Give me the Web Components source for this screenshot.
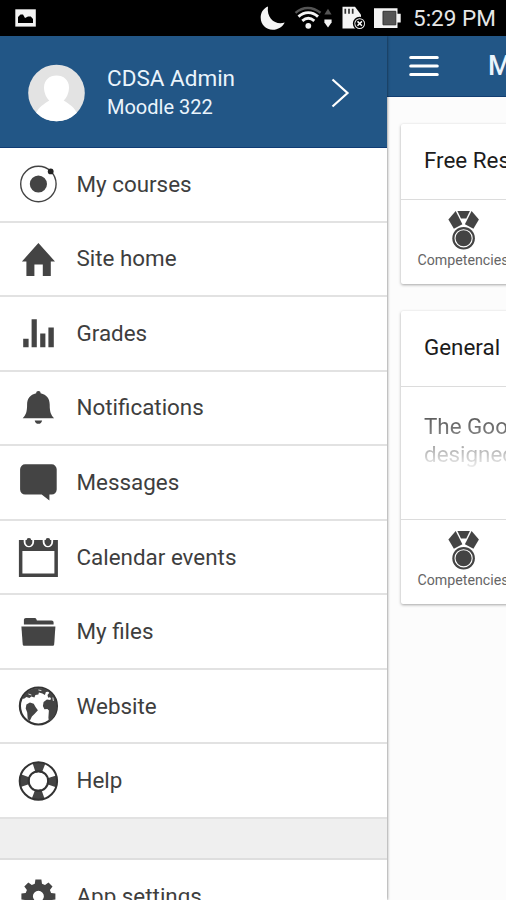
<!DOCTYPE html>
<html lang="en">
<head>
<meta charset="utf-8">
<title>Moodle Mobile</title>
<style>
  html, body {
    margin: 0;
    height: 100%;
    overflow: hidden;
    font-family: Roboto, "Liberation Sans", sans-serif;
    color: #3e3e3e;
    background: #fcfcfc;
  }
</style>
</head>
<body>
<mm-app>
  <mm-status-bar slot="status" time="5:29 PM"></mm-status-bar>

  <mm-side-menu slot="menu">
    <mm-user-header slot="header">
      <span slot="name">CDSA Admin</span>
      <span slot="site">Moodle 322</span>
    </mm-user-header>
    <mm-menu-item icon="ionic">My courses</mm-menu-item>
    <mm-menu-item icon="home">Site home</mm-menu-item>
    <mm-menu-item icon="stats">Grades</mm-menu-item>
    <mm-menu-item icon="bell">Notifications</mm-menu-item>
    <mm-menu-item icon="chat">Messages</mm-menu-item>
    <mm-menu-item icon="calendar">Calendar events</mm-menu-item>
    <mm-menu-item icon="folder">My files</mm-menu-item>
    <mm-menu-item icon="globe">Website</mm-menu-item>
    <mm-menu-item icon="help">Help</mm-menu-item>
    <mm-menu-divider></mm-menu-divider>
    <mm-menu-item icon="gear">App settings</mm-menu-item>
  </mm-side-menu>

  <mm-page slot="page">
    <span slot="title">M</span>
    <mm-card>
      <span slot="title">Free Res</span>
      <span slot="action">Competencies</span>
    </mm-card>
    <mm-card summary>
      <span slot="title">General</span>
      <span slot="summary">The Goo<br>designed</span>
      <span slot="action">Competencies</span>
    </mm-card>
  </mm-page>
</mm-app>

<script>
const ICONS = {
  ionic: `
    <circle cx="20" cy="20" r="17.7" fill="none" stroke="#444" stroke-width="1.4"/>
    <circle cx="20" cy="20" r="8.6"/>
    <circle cx="32.3" cy="7.4" r="2.9" fill="#222"/>`,
  home: `<path d="M20 4 3.5 22.5H8V37h8V25.5h8.4V37h8V22.5h4.2z"/>`,
  stats: `<path d="M4.8 25.8h5.4v8.4H4.8zM13.2 6.2h5.2v28h-5.2zM21.8 20.4h5.2v13.8h-5.2zM30 14.6h5.4v19.6H30z"/>`,
  bell: `
    <path d="M20 3c1.4 0 2.2.8 2.2 2.2 6.2 1.3 9.1 5.6 9.1 11.4 0 7.6 1.2 10.3 4.4 13.6H4.3C7.5 26.9 8.7 24.2 8.7 16.6c0-5.8 2.9-10.1 9.1-11.4C17.8 3.8 18.6 3 20 3z"/>
    <path d="M16.3 32.4h7.4c-.5 2.2-1.7 3.4-3.7 3.4s-3.2-1.2-3.7-3.4z"/>`,
  chat: `<path d="M7 2.300h26a5 5 0 0 1 5.300 5V27.500a5 5 0 0 1-5.300 5h-2v6L23.300 32.500H7a5 5 0 0 1-5.300-5V7.300a5 5 0 0 1 5.300-5z"/>`,
  calendar: `
    <path fill-rule="evenodd" d="M.5 3h39v37H.5zM4 14v22.600h32V14z"/>
    <path d="M6.200 2v3a4.300 4.300 0 0 0 8.600 0V2M25.200 2v3a4.300 4.300 0 0 0 8.600 0V2" fill="none" stroke="#fff" stroke-width="1.800"/>
    <rect x="8.200" y="1" width="4.600" height="8" rx="2.200"/>
    <rect x="27.200" y="1" width="4.600" height="8" rx="2.200"/>`,
  folder: `
    <path d="M5.500 12.500V8.100c0-1.200.8-2 2-2h8.300c1.200 0 1.900.5 2.300 1.400l.4 1H33c1.400 0 2.200.8 2.200 2v2z"/>
    <path d="M3 14.600h34l-1.200 17.700c-.1 1-.8 1.500-1.700 1.500H6c-.9 0-1.600-.5-1.700-1.500z"/>`,
  globe: `
    <circle cx="20" cy="20" r="18.500" fill="none" stroke="#333" stroke-width="2.200"/>
    <path d="M4 13C6 6 13 2 20 2c4 0 8 1 11 3.500l-3.500.5-1 3-2.500-1.500-3.500-1-.5 2-3 .5-1 2.500-3-1-2 1.500L8 11l-2 1.500z"/>
    <path d="M8 18.500l3.500-2 3.800 1.200 2 3.500 2.200 3-3.200 3.500-2.800 2.800-2.200 4.500-2-2-.5-6.500-1.500-4z"/>
    <path d="M30 5 34.500 9 38 16l.5 6-1.500 6-4 6-2.500 2-.5-4.500.5-7-1.500-1.500-3 .2-1.500-3.200.7-4 3.300-2.500 3.500.5.5-2-2.800-.5-.6-2.500 1.600-2-1.200-2.500z"/>
    <path d="M34.500 11.500l.5 3.500M31 11l1.500 2M10 8l3 1M20 4l3 .6" fill="none" stroke="#ddd"/>`,
  help: `
    <circle cx="20" cy="20" r="13.700" fill="none" stroke="#444" stroke-width="10" stroke-dasharray="9.500 12.020" stroke-dashoffset="4.750"/>
    <circle cx="20" cy="20" r="18.700" fill="none" stroke="#333" stroke-width="2"/>
    <circle cx="20" cy="20" r="9.800" fill="none" stroke="#333" stroke-width="2"/>`,
  gear: `
    <path fill-rule="evenodd" d="M17 3.500h6l.6 4.300 3 1.200 3.500-2.600 4 4-2.600 3.500 1.200 3 4.300.6v6l-4.300.6-1.200 3 2.600 3.500-4 4-3.500-2.600-3 1.200-.6 4.300h-6l-.6-4.300-3-1.200-3.500 2.600-4-4 2.600-3.500-1.200-3L3 23.500v-6l4.300-.6 1.200-3-2.600-3.500 4-4L13.400 9l3-1.200zM20 14.800a5.500 5.500 0 1 0 0 11 5.500 5.500 0 0 0 0-11z"/>`,
  medal: `
    <path d="M14 1h12.500l-3.600 7.600h-5.300z"/>
    <path d="M12.300 1 19 14.200 10.500 18.800 5 9.500z"/>
    <path d="M28.200 1 21.500 14.200 30 18.800 35.500 9.500z"/>
    <circle cx="20.200" cy="28.300" r="12.200" fill="#fff"/>
    <circle cx="20.200" cy="28.300" r="11.300"/>
    <circle cx="20.200" cy="28.300" r="8.600" fill="none" stroke="#fff" stroke-width="1.100"/>`
};

class MmIcon extends HTMLElement {
  constructor() {
    super();
    this._root = this.attachShadow({mode: 'open'});
  }

  connectedCallback() {
    this._root.innerHTML = `
    <style>
    :host {
      display: block;
      width: 40px;
      height: 40px;
      flex-shrink: 0;
    }

    svg {
      display: block;
      width: 100%;
      height: 100%;
      overflow: visible;
      fill: #444;
    }
    </style>
    <svg viewBox="-0.4 0 40 40">${ICONS[this.getAttribute('name')] || ''}</svg>
    `;
  }
}

class MmStatusBar extends HTMLElement {
  constructor() {
    super();
    this._root = this.attachShadow({mode: 'open'});
  }

  connectedCallback() {
    this._root.innerHTML = `
    <style>
    :host {
      display: flex;
      align-items: center;
      box-sizing: border-box;
      height: 36px;
      padding: 0 11px 0 15px;
      background: #000;
      color: #e6e6e6;
    }

    svg {
      display: block;
      flex-shrink: 0;
      fill: #f4f4f4;
    }

    .spacer {
      flex: 1;
    }

    .time {
      width: 82px;
      margin-left: 12px;
      font-size: 22.500px;
      line-height: 38px;
      white-space: nowrap;
    }
    </style>
    <svg width="21" height="36" viewBox="15 0 21 36">
      <path d="M15.300 9.300h20.500v17.300H15.300z"/>
      <path d="M18 23v-6l2.500-2.500h2.500l2 3.500 3-1.500h2.800L33 19v4z" fill="#000"/>
    </svg>
    <div class="spacer"></div>
    <svg width="143" height="36" viewBox="258 0 143 36">
      <path d="M268 6.500c-5 2-7.300 6.500-7.300 11.200 0 6.800 5.300 12 12 12 5.300 0 10-3 12-7.300-8.500 3.200-18.500-3.500-16.700-15.900z"/>
      <g fill="none" stroke-width="2.900">
        <path d="M295.500 12.800c7.500-6.500 17-6.500 25 0" stroke="#555" stroke-width="2.400"/>
        <path d="M298.500 16.600c6-5.300 13.500-5.300 19.500 0M302.300 20.800c3.800-3.200 8.200-3.200 12 0" stroke="#f4f4f4"/>
      </g>
      <circle cx="308.300" cy="25.800" r="2.900"/>
      <path d="M324.400 14.500h7.200L328 8.800z" fill="#555"/>
      <path d="M324.400 19.500h7.200v3L328 27.500l-3.600-5z"/>
      <path d="M342.500 6.800h12.500l6 8V28.500h-18.500z"/>
      <path d="M345.300 8.800v5M349 8.800v5M352.700 8.800v5" stroke="#333" stroke-width="1.700"/>
      <circle cx="359.700" cy="23.600" r="6.100" stroke="#000" stroke-width="1.500"/>
      <circle cx="359.700" cy="23.600" r="4.400" fill="#000"/>
      <path d="M357.500 21.400l4.400 4.400M361.900 21.400l-4.400 4.400" stroke="#fff" stroke-width="1.500"/>
      <path d="M374 8.300h23.500v5.400h3.200v8.800h-3.200V28H374z"/>
      <path d="M383 11.300h12.800v13.500H383z" fill="#555" stroke="#333" stroke-width="1"/>
    </svg>
    <div class="time">${this.getAttribute('time')}</div>
    `;
  }
}

class MmUserHeader extends HTMLElement {
  constructor() {
    super();
    this._root = this.attachShadow({mode: 'open'});
  }

  connectedCallback() {
    this._root.innerHTML = `
    <style>
    :host {
      display: flex;
      align-items: center;
      box-sizing: border-box;
      height: 112px;
      padding: 3px 37px 0 28px;
      border-bottom: 1px solid #103c74;
      background: #225686;
      color: #eaf4fc;
    }

    svg {
      display: block;
      flex-shrink: 0;
    }

    .info {
      flex: 1;
      margin-left: 22px;
      white-space: nowrap;
    }

    .name {
      font-size: 22.500px;
      line-height: 29px;
    }

    .site {
      font-size: 20px;
      line-height: 29px;
    }
    </style>
    <svg width="57" height="58" viewBox="0 0 57 58">
      <defs><clipPath id="face"><circle cx="28.500" cy="29" r="28.300"/></clipPath></defs>
      <g clip-path="url(#face)">
        <path d="M0 0h57v58H0z" fill="#e3e3e3"/>
        <path d="M28.500 11.500c7 0 12.500 4.500 12.500 12 0 5.500-2.500 10.500-5.300 13C41 40 46 43 49 49v9H8v-9c3-6 8-9 13.300-12.500C18.500 34 16 29 16 23.500c0-7.500 5.500-12 12.500-12z" fill="#fff"/>
      </g>
    </svg>
    <div class="info">
      <div class="name"><slot name="name"></slot></div>
      <div class="site"><slot name="site"></slot></div>
    </div>
    <svg width="19" height="30" viewBox="0 0 19 30">
      <path d="M1.500 1.500 16.500 15l-15 13.500" fill="none" stroke="#fff" stroke-width="2.200"/>
    </svg>
    `;
  }
}

class MmMenuItem extends HTMLElement {
  constructor() {
    super();
    this._root = this.attachShadow({mode: 'open'});
  }

  connectedCallback() {
    this._root.innerHTML = `
    <style>
    :host {
      display: flex;
      align-items: center;
      flex-shrink: 0;
      box-sizing: border-box;
      height: 74.550px;
      padding-left: 18px;
      border-bottom: 2px solid #e2e2e2;
      background: #fff;
    }

    .label {
      padding-bottom: 1px;
      margin-left: 18.500px;
      font-size: 22.400px;
      line-height: 30px;
      white-space: nowrap;
    }
    </style>
    <mm-icon name="${this.getAttribute('icon')}"></mm-icon>
    <div class="label"><slot></slot></div>
    `;
  }
}

class MmMenuDivider extends HTMLElement {
  constructor() {
    super();
    this._root = this.attachShadow({mode: 'open'});
  }

  connectedCallback() {
    this._root.innerHTML = `
    <style>
    :host {
      display: block;
      flex-shrink: 0;
      box-sizing: border-box;
      height: 41px;
      border-bottom: 2px solid #dedede;
      background: #efefef;
    }
    </style>
    `;
  }
}

class MmSideMenu extends HTMLElement {
  constructor() {
    super();
    this._root = this.attachShadow({mode: 'open'});
  }

  connectedCallback() {
    this._root.innerHTML = `
    <style>
    :host {
      display: flex;
      flex-direction: column;
      height: 100%;
      background: #fff;
    }

    .items {
      display: flex;
      flex-direction: column;
      flex: 1;
      min-height: 0;
      overflow: hidden;
    }
    </style>
    <slot name="header"></slot>
    <div class="items"><slot></slot></div>
    `;
  }
}

class MmCard extends HTMLElement {
  constructor() {
    super();
    this._root = this.attachShadow({mode: 'open'});
  }

  connectedCallback() {
    const summary = this.hasAttribute('summary')
      ? '<div class="summary"><slot name="summary"></slot></div>'
      : '';

    this._root.innerHTML = `
    <style>
    :host {
      display: block;
      width: 420px;
      border-radius: 2px;
      background: #fff;
      box-shadow: 0 1px 3px rgba(0, 0, 0, 0.35);
    }

    .title {
      box-sizing: border-box;
      height: 76px;
      padding-left: 23px;
      border-bottom: 1px solid #dcdcdc;
      color: #1c1c1c;
      font-size: 22.400px;
      line-height: 72px;
      white-space: nowrap;
    }

    .summary {
      box-sizing: border-box;
      height: 133px;
      padding: 25px 0 0 23px;
      border-bottom: 1px solid #dcdcdc;
      font-size: 22.400px;
      line-height: 28px;
      color: transparent;
      background: linear-gradient(#5c5c5c 30px, #858585 50px, #a8a8a8 58px, #fff 86px) text;
    }

    .action {
      display: flex;
      flex-direction: column;
      align-items: center;
      box-sizing: border-box;
      width: 124px;
      height: 84px;
      padding-top: 10px;
      font-size: 14.200px;
      line-height: 20px;
      color: #666;
    }

    mm-icon {
      height: 40px;
    }
    </style>
    <div class="title"><slot name="title"></slot></div>
    ${summary}
    <div class="action">
      <mm-icon name="medal"></mm-icon>
      <slot name="action"></slot>
    </div>
    `;
  }
}

class MmPage extends HTMLElement {
  constructor() {
    super();
    this._root = this.attachShadow({mode: 'open'});
  }

  connectedCallback() {
    this._root.innerHTML = `
    <style>
    :host {
      display: block;
      height: 100%;
      overflow: hidden;
      background: #fcfcfc;
    }

    .toolbar {
      display: flex;
      align-items: center;
      box-sizing: border-box;
      height: 61px;
      padding-left: 22px;
      border-bottom: 1px solid #123e72;
      background: #225686;
      color: #eaf4fc;
    }

    .toolbar svg {
      display: block;
      flex-shrink: 0;
    }

    .heading {
      margin-left: 49px;
      font-size: 27px;
      font-weight: 500;
      line-height: 60px;
    }

    .cards {
      display: flex;
      flex-direction: column;
      gap: 27px;
      padding: 27px 0 0 14px;
    }
    </style>
    <div class="toolbar">
      <svg width="30" height="24" viewBox="0 0 30 24">
        <path d="M1.800 3.500h26.400M1.800 12h26.400M1.800 20.500h26.400" stroke="#fff" stroke-width="3.200" stroke-linecap="round"/>
      </svg>
      <div class="heading"><slot name="title"></slot></div>
    </div>
    <div class="cards"><slot></slot></div>
    `;
  }
}

class MmApp extends HTMLElement {
  constructor() {
    super();
    this._root = this.attachShadow({mode: 'open'});
  }

  connectedCallback() {
    this._root.innerHTML = `
    <style>
    :host {
      display: flex;
      flex-direction: column;
      height: 100vh;
      overflow: hidden;
    }

    .panes {
      display: grid;
      grid-template-columns: 387px 1fr;
      flex: 1;
      min-height: 0;
    }

    .menu {
      z-index: 1;
      min-height: 0;
      box-shadow: 0 0 3px rgba(0, 0, 0, 0.6);
      clip-path: inset(0 -6px 0 0);
    }

    .page {
      min-width: 0;
      min-height: 0;
    }
    </style>
    <slot name="status"></slot>
    <div class="panes">
      <div class="menu"><slot name="menu"></slot></div>
      <div class="page"><slot name="page"></slot></div>
    </div>
    `;
  }
}

window.customElements.define('mm-icon', MmIcon);
window.customElements.define('mm-status-bar', MmStatusBar);
window.customElements.define('mm-user-header', MmUserHeader);
window.customElements.define('mm-menu-item', MmMenuItem);
window.customElements.define('mm-menu-divider', MmMenuDivider);
window.customElements.define('mm-side-menu', MmSideMenu);
window.customElements.define('mm-card', MmCard);
window.customElements.define('mm-page', MmPage);
window.customElements.define('mm-app', MmApp);
</script>
</body>
</html>
